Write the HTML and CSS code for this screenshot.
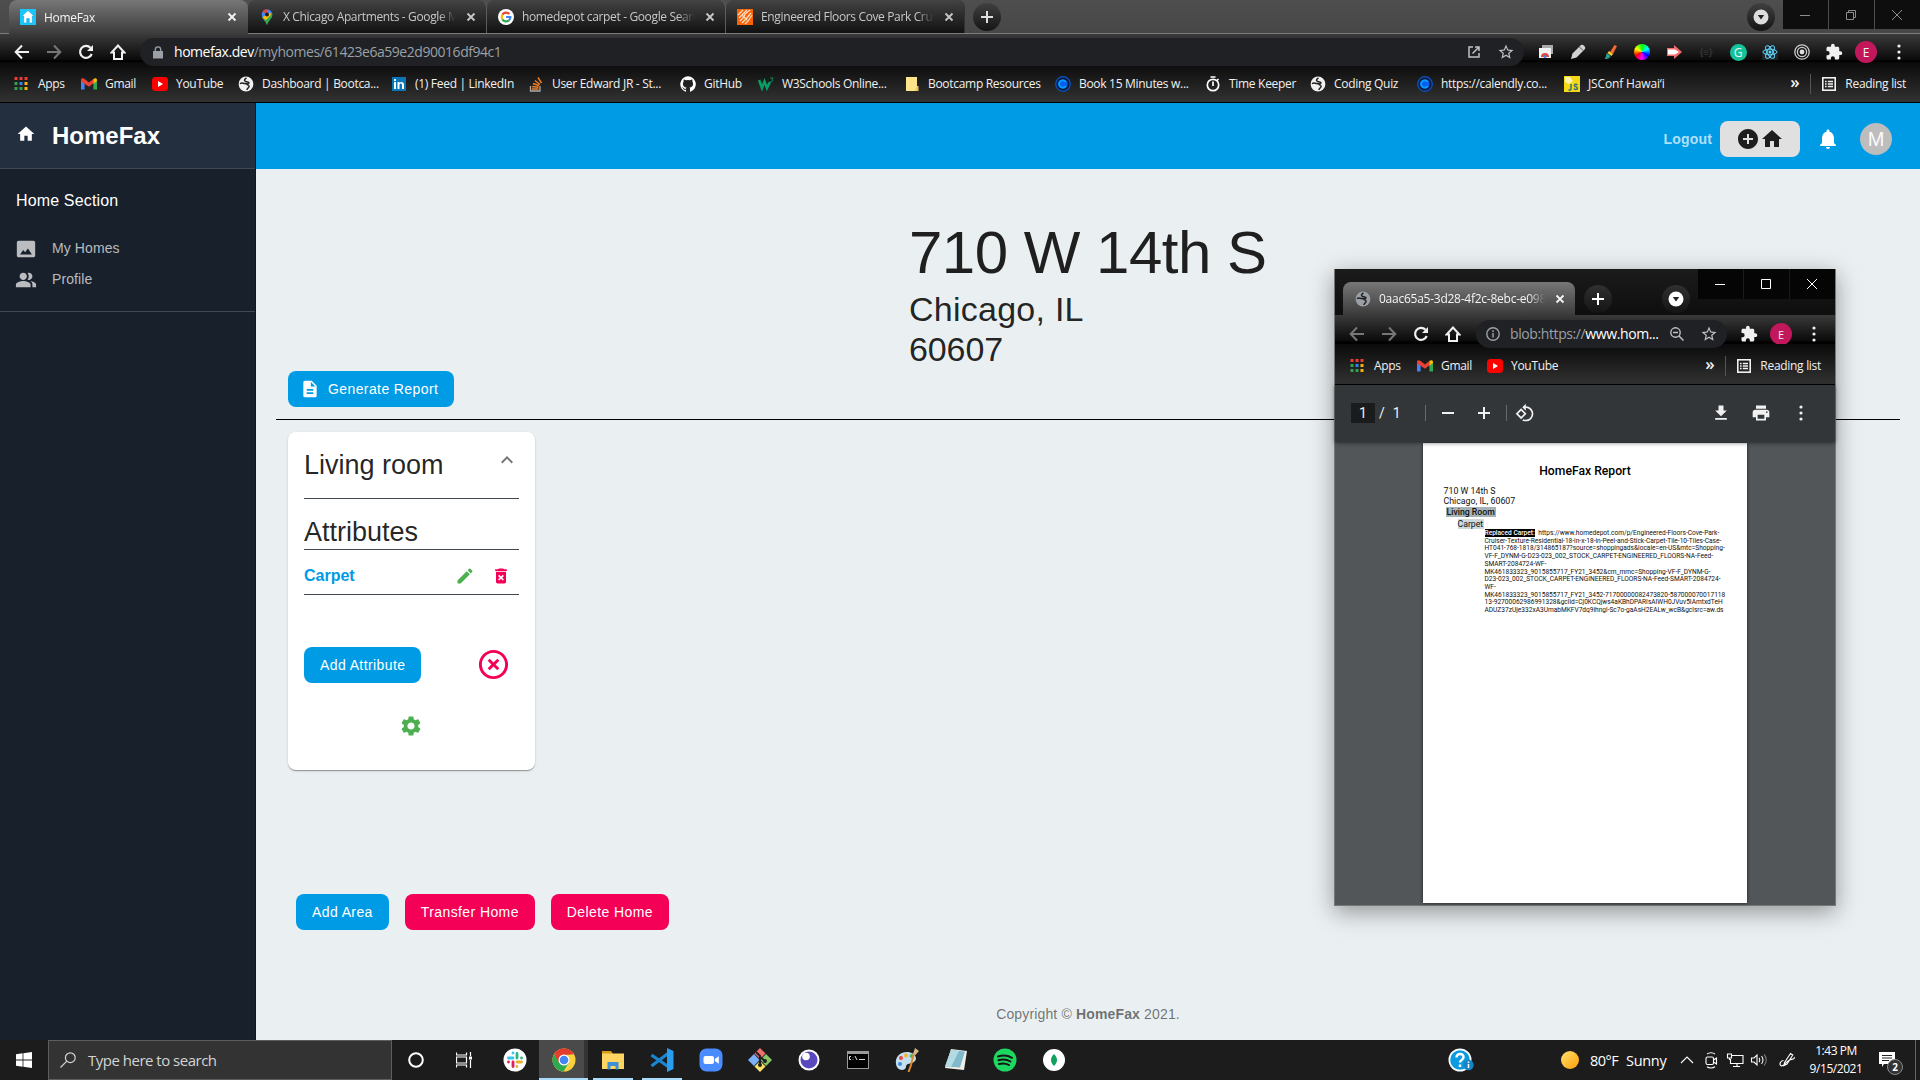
FILE: index.html
```html
<!DOCTYPE html>
<html lang="en">
<head>
<meta charset="utf-8">
<title>HomeFax</title>
<link rel="stylesheet" href="styles.css">
</head>
<body>
<svg class="sprite" aria-hidden="true">
  <symbol id="close" viewBox="0 0 10 10"><path d="M1.5 1.5l7 7m0-7l-7 7" fill="none" stroke="currentColor" stroke-width="1.8"/></symbol>
  <symbol id="thinx" viewBox="0 0 10 10"><path d="M0 0l10 10m0-10L0 10" fill="none" stroke="currentColor" stroke-width="1"/></symbol>
  <symbol id="plus" viewBox="0 0 12 12"><path d="M6 0v12M0 6h12" stroke="currentColor" stroke-width="2"/></symbol>
  <symbol id="minus" viewBox="0 0 12 12"><path d="M0 6h12" stroke="currentColor" stroke-width="2"/></symbol>
  <symbol id="drop" viewBox="0 0 16 16"><circle cx="8" cy="8" r="7.5" fill="currentColor"/><path d="M4.8 6h6.4L8 10.5z" fill="#222"/></symbol>
  <symbol id="back" viewBox="0 0 16 16"><path d="M15 8H2M8 1.5L1.700 8 8 14.500" fill="none" stroke="currentColor" stroke-width="2"/></symbol>
  <symbol id="fwd" viewBox="0 0 16 16"><path d="M1 8h13M8 1.500L14.300 8 8 14.500" fill="none" stroke="currentColor" stroke-width="2"/></symbol>
  <symbol id="reload" viewBox="0 0 16 16"><path d="M13.700 10A6 6 0 1 1 12.500 3.800" fill="none" stroke="currentColor" stroke-width="2.200"/><path d="M15 1v6H9z" fill="currentColor"/></symbol>
  <symbol id="homeo" viewBox="0 0 16 16"><path d="M8 1.500L1.500 8.500H4V15h8V8.500h2.500z" fill="none" stroke="currentColor" stroke-width="2"/></symbol>
  <symbol id="star" viewBox="0 0 24 24"><path fill="currentColor" d="M22 9.240l-7.190-.62L12 2 9.190 8.630 2 9.240l5.460 4.730L5.820 21 12 17.270 18.180 21l-1.630-7.030L22 9.240zM12 15.400l-3.760 2.270 1-4.280-3.320-2.880 4.380-.38L12 6.100l1.710 4.040 4.380.38-3.320 2.880 1 4.280L12 15.400z"/></symbol>
  <symbol id="puzzle" viewBox="0 0 24 24"><path fill="currentColor" d="M20.500 11H19V7c0-1.100-.9-2-2-2h-4V3.500a2.500 2.500 0 0 0-5 0V5H4c-1.100 0-2 .9-2 2v3.800h1.500a2.700 2.700 0 0 1 0 5.400H2V20c0 1.100.9 2 2 2h3.800v-1.500a2.700 2.700 0 0 1 5.400 0V22H17c1.100 0 2-.9 2-2v-4h1.500a2.500 2.500 0 0 0 0-5z"/></symbol>
  <symbol id="dots" viewBox="0 0 4 16"><g fill="currentColor"><circle cx="2" cy="2" r="1.600"/><circle cx="2" cy="8" r="1.600"/><circle cx="2" cy="14" r="1.600"/></g></symbol>
  <symbol id="apps" viewBox="0 0 14 14"><path fill="#f23b35" d="M0 0h3v3H0zM5 0h3v3H5zM10 0h3v3h-3z"/><path fill="#2fa14f" d="M0 5h3v3H0zM0 10h3v3H0z"/><path fill="#2a86f3" d="M5 5h3v3H5z"/><path fill="#2fa14f" d="M5 10h3v3H5z"/><path fill="#fbb30a" d="M10 5h3v3h-3zM10 10h3v3h-3z"/></symbol>
  <symbol id="gmail" viewBox="0 0 16 12"><path fill="#4285f4" d="M0 2v9.500h3.600V4.500z"/><path fill="#34a853" d="M12.400 4.500v7H16V2z"/><path fill="#ea4335" d="M0 2C0 0 2-.4 3.600 1L8 4.500 12.400 1v4.200L8 8.700 0 3.500z"/><path fill="#fbbc04" d="M12.400 1C14-.4 16 0 16 2v1l-3.600 2.700z"/></symbol>
  <symbol id="yt" viewBox="0 0 16 14"><rect width="16" height="14" rx="3.500" fill="#f00"/><path d="M6 4l5 3-5 3z" fill="#fff"/></symbol>
  <symbol id="globe" viewBox="0 0 16 16"><circle cx="8" cy="8" r="7.400" fill="currentColor"/><path d="M8.500 2C6 3.300 6 4.500 7.500 5.500c2 .8 3.500 0 3.500 1.300 0 1.300-2.500 1-4.500.7C4.500 7.200 3.500 6.500 2 7.800M9 14c0-1.500 1.500-2 2-3.200s-1-2.300-2.500-2.300" fill="none" stroke="#222" stroke-width="1.500"/></symbol>
  <symbol id="cal" viewBox="0 0 16 16"><circle cx="8" cy="8" r="7.300" fill="#0b1c42" stroke="#0957c8" stroke-width="1.200"/><circle cx="8" cy="8" r="4.600" fill="#0560f0"/><path d="M10.800 6A3.700 3.700 0 1 0 10.800 10" fill="none" stroke="#0a9bff" stroke-width="1.800"/></symbol>
  <symbol id="list" viewBox="0 0 14 14"><rect x=".8" y=".8" width="12.400" height="12.400" fill="none" stroke="currentColor" stroke-width="1.600"/><path d="M3 4.500h1.600M3 7h1.600M3 9.500h1.600M5.800 4.500H11M5.800 7H11M5.800 9.500H11" stroke="currentColor" stroke-width="1.400"/></symbol>
  <symbol id="home" viewBox="0 0 24 24"><path fill="currentColor" d="M10 20v-6h4v6h5v-8h3L12 3 2 12h3v8z"/></symbol>
</svg>

<header class="browser">
  <div class="tabs">
    <div class="tab on"><svg class="fav" viewBox="0 0 16 16"><rect width="16" height="16" fill="#18c6fb"/><path d="M8 1.500L2 7h1.700v7h3V9.500h2.600V14h3V7H14z" fill="#fff" stroke="#0b9bd8" stroke-width=".5"/></svg><span class="tab-t">HomeFax</span><svg class="x"><use href="#close"/></svg></div>
    <div class="tab"><svg class="fav" viewBox="0 0 16 16"><path fill="#34a853" d="M3 8c1 3 4 4 5 8 1-4 5-6 5-10.500z"/><circle cx="8" cy="5.500" r="5.300" fill="#4285f4"/><path fill="#ea4335" d="M3.500 2.500A5.500 5.500 0 0 1 8 .2L7.800 5.500z"/><path fill="#fbbc04" d="M3.500 8.200L11 3.500 13 7 7.500 12z"/><path fill="#34a853" d="M6 12l7.300-7.500c.5 4.500-3.500 6-5.300 11.500z"/><circle cx="8" cy="5.500" r="2" fill="#202020"/></svg><span class="tab-t">X Chicago Apartments - Google Maps</span><svg class="x"><use href="#close"/></svg></div>
    <div class="tab"><svg class="fav" viewBox="0 0 16 16"><circle cx="8" cy="8" r="8" fill="#fff"/><g fill="none" stroke-width="2.200"><path stroke="#ea4335" d="M4.400 5.600A4.400 4.400 0 0 1 11.300 5"/><path stroke="#fbbc04" d="M4.400 5.600a4.600 4.600 0 0 0 0 4.800"/><path stroke="#34a853" d="M4.400 10.400a4.400 4.400 0 0 0 6.500 1"/><path stroke="#4285f4" d="M8 8h4.400c0 1.500-.5 2.600-1.500 3.400"/></g></svg><span class="tab-t">homedepot carpet - Google Search</span><svg class="x"><use href="#close"/></svg></div>
    <div class="tab last"><svg class="fav" viewBox="0 0 16 16"><rect width="16" height="16" fill="#f96302"/><path d="M1 6l5-5M2 9l8-8M3 12l4-4 1-3 5-4M5 14l4-4 5-6M8 15l3-3 4-6M5 6l5 5" fill="none" stroke="#ffe0c8" stroke-width="1.200"/></svg><span class="tab-t">Engineered Floors Cove Park Cruiser</span><svg class="x"><use href="#close"/></svg></div>
    <span class="round"><svg class="s12"><use href="#plus"/></svg></span>
    <span class="round push"><svg class="s16"><use href="#drop"/></svg></span>
    <div class="wins dim"><span><svg class="s10"><path d="M0 5.500h10" stroke="currentColor"/></svg></span><span><svg class="s10" viewBox="0 0 10 10"><path d="M.5 2.500h7v7h-7zM2.500 2.500v-2h7v7h-2" fill="none" stroke="currentColor"/></svg></span><span><svg class="s10"><use href="#thinx"/></svg></span></div>
  </div>
  <div class="toolbar">
    <div class="nav"><span><svg class="s16"><use href="#back"/></svg></span><span class="off"><svg class="s16"><use href="#fwd"/></svg></span><span><svg class="s16"><use href="#reload"/></svg></span><span><svg class="s16"><use href="#homeo"/></svg></span></div>
    <div class="url">
      <svg class="lock" viewBox="0 0 10 12"><path d="M0 4.500h10V12H0z" fill="currentColor"/><path d="M2.300 5V3a2.700 2.700 0 0 1 5.400 0v2" fill="none" stroke="currentColor" stroke-width="1.300"/></svg>
      <span class="addr"><b>homefax.dev</b>/myhomes/61423e6a59e2d90016df94c1</span>
      <div class="slots url-i"><span><svg class="s12" viewBox="0 0 12 12"><path d="M5 1H1v10h10V7M7 1h4v4M11 1L4.500 7.500" fill="none" stroke="currentColor" stroke-width="1.500"/></svg></span><span><svg class="s17"><use href="#star"/></svg></span></div>
    </div>
    <div class="slots exts">
      <span><svg class="s16" viewBox="0 0 16 16"><path d="M4 1h11v9H4z" fill="#aaa"/><path d="M1 4h12v10H1z" fill="#f2f2f2"/><path d="M3 13a4 4 0 0 1 8 0z" fill="#e24a3b"/><circle cx="7" cy="12.500" r="1.500" fill="#4285f4"/></svg></span>
      <span><svg class="s16" viewBox="0 0 16 16"><path d="M1 15l1.500-5.500L11 1c2-1 5 2 4 4l-8.500 8.500z" fill="#d2d2d2"/><path d="M9.500 3l3.500 3.500" stroke="#555"/></svg></span>
      <span><svg class="s16" viewBox="0 0 16 16"><path d="M8 8l4.500-7 2.500 1-4 8z" fill="#f36a32"/><path d="M7 7l4 3-1.500 2-4-3z" fill="#f9c937"/><path d="M5 9l3.500 3c-1 3-4 3-6 3 2-2 1-4 2.500-6z" fill="#2e9e8a"/></svg></span>
      <span><i class="wheel"></i></span>
      <span><svg class="s16" viewBox="0 0 16 16"><path d="M1 4h7V1l8 7-8 7v-3H1z" fill="#f36b6b"/><path d="M2 5.500h7l4 2.500-4 2.500H2z" fill="#fff"/></svg></span>
      <span class="curly">{≡}</span>
      <span><i class="gram">G</i></span>
      <span><svg class="s16" viewBox="0 0 16 16"><rect width="16" height="16" fill="#20232a"/><g fill="none" stroke="#61dafb"><ellipse cx="8" cy="8" rx="7" ry="2.800"/><ellipse cx="8" cy="8" rx="7" ry="2.800" transform="rotate(60 8 8)"/><ellipse cx="8" cy="8" rx="7" ry="2.800" transform="rotate(120 8 8)"/></g><circle cx="8" cy="8" r="1.500" fill="#61dafb"/></svg></span>
      <span><svg class="s16" viewBox="0 0 16 16"><g fill="none" stroke="#ccc" stroke-width="1.300"><circle cx="8" cy="8" r="7.200"/><circle cx="8" cy="8" r="4.600"/></g><circle cx="8" cy="8" r="2.400" fill="#ddd"/></svg></span>
      <span><svg class="s17"><use href="#puzzle"/></svg></span>
      <span><i class="me">E</i></span>
      <span><svg class="dots"><use href="#dots"/></svg></span>
    </div>
  </div>
  <nav class="marks">
    <a style="width:67px"><svg class="s14"><use href="#apps"/></svg>Apps</a>
    <a style="width:71px"><svg><use href="#gmail"/></svg>Gmail</a>
    <a style="width:86px"><svg><use href="#yt"/></svg>YouTube</a>
    <a style="width:153px"><svg><use href="#globe"/></svg>Dashboard | Bootca...</a>
    <a style="width:137px"><svg viewBox="0 0 16 16"><path fill="#0a76b7" d="M1 1h14v14H1z"/><path fill="#fff" d="M3 6h2v7H3zM3 3h2v2H3zM6.500 6h2v1c1-1.800 4.500-1.500 4.500 1.500V13h-2V9c0-2-2.500-2-2.500 0v4h-2z"/></svg>(1) Feed | LinkedIn</a>
    <a style="width:152px"><svg viewBox="0 0 16 16"><path d="M2.500 10v5h9.500v-5" fill="none" stroke="#aaa" stroke-width="1.300"/><path d="M4 13h6.500M4.200 10.500l6.300.8M5 7.500l6 2M7 4.500l5 4M10 1.500l3.500 5.500" stroke="#f48024" stroke-width="1.400"/></svg>User Edward JR - St...</a>
    <a style="width:78px"><svg viewBox="0 0 16 16"><path fill="#fff" d="M8 .2a8 8 0 0 0-2.500 15.500c.4 0 .5-.2.500-.4v-1.500c-2.200.5-2.700-1-2.700-1-.4-.9-.9-1.100-.9-1.100-.7-.5.1-.5.1-.5.800.1 1.200.8 1.200.8.700 1.200 1.900.9 2.300.7 0-.5.300-.9.500-1.100-1.800-.2-3.600-.9-3.600-4 0-.9.300-1.600.8-2.100-.1-.2-.4-1 .1-2.100 0 0 .7-.2 2.200.8a7.600 7.600 0 0 1 4 0c1.500-1 2.200-.8 2.200-.8.500 1.100.2 1.900.1 2.100.5.500.8 1.200.8 2.100 0 3.100-1.800 3.800-3.600 4 .3.200.5.700.5 1.500v2.200c0 .2.200.5.600.4A8 8 0 0 0 8 .2z"/></svg>GitHub</a>
    <a style="width:146px"><svg viewBox="0 0 16 16"><path d="M1 4l3 8 2.500-6.500L9 12l3-6" fill="none" stroke="#0a9d63" stroke-width="2.600"/><path d="M12.500 2h2.500l-1 1.500c1.500.5.5 2.500-1.500 2" fill="none" stroke="#0a9d63"/></svg>W3Schools Online...</a>
    <a style="width:151px"><svg viewBox="0 0 16 16"><path d="M2 1h11v14H2z" fill="#ffe48c"/><path d="M13 10h1.500v5H11z" fill="#eec75a"/></svg>Bootcamp Resources</a>
    <a style="width:150px"><svg><use href="#cal"/></svg>Book 15 Minutes w...</a>
    <a style="width:105px"><svg viewBox="0 0 16 16"><g fill="none" stroke="#fff" stroke-width="1.700"><circle cx="8" cy="9" r="5.700"/><path d="M5.500 1h5M8 5.500V10M12 4.500l1.500-1.500"/></g></svg>Time Keeper</a>
    <a style="width:107px"><svg><use href="#globe"/></svg>Coding Quiz</a>
    <a style="width:147px"><svg><use href="#cal"/></svg>https://calendly.co...</a>
    <a><svg viewBox="0 0 16 16"><path fill="#f5d916" d="M0 0h16v16H0z"/><path fill="#fff3b0" d="M1 1h5l3 4-4 3-4-2z"/><path d="M7 8v5c0 1.500-2 1.500-2.500.5M13.500 9c-1-1-3.500-1-3 .8.500 1 3 .8 3 2.500s-3 1.500-3.500.2" fill="none" stroke="#3b6f78" stroke-width="1.500"/></svg><span class="jsc">JSConf Hawai‘i</span></a>
    <span class="more">»</span><span class="rl"><svg class="s14"><use href="#list"/></svg>Reading list</span>
  </nav>
</header>

<div class="app">
  <aside class="side">
    <div class="brand"><svg class="s20"><use href="#home"/></svg>HomeFax</div>
    <div class="cat">
      <h2>Home Section</h2>
      <a><svg class="s22" viewBox="0 0 24 24"><path fill="currentColor" d="M22 19V5c0-1.100-.9-2-2-2H4c-1.100 0-2 .9-2 2v14c0 1.100.9 2 2 2h16c1.100 0 2-.9 2-2zM8.900 12.980l2.100 2.530 3.100-4 4.400 6.490H5.500z"/></svg>My Homes</a>
      <a><svg class="s22" viewBox="0 0 24 24"><path fill="currentColor" d="M16.670 13.130C18.040 14.060 19 15.320 19 17v3h4v-3c0-2.180-3.570-3.470-6.330-3.870zM15 12c2.210 0 4-1.790 4-4s-1.790-4-4-4c-.47 0-.91.100-1.330.24C14.500 5.270 15 6.580 15 8s-.5 2.730-1.330 3.760c.42.140.86.240 1.330.24zM9 12c2.210 0 4-1.790 4-4s-1.790-4-4-4-4 1.790-4 4 1.790 4 4 4zm0 1c-2.670 0-8 1.340-8 4v3h16v-3c0-2.660-5.330-4-8-4z"/></svg>Profile</a>
    </div>
  </aside>
  <div class="col">
    <div class="topbar">
      <a class="logout">Logout</a>
      <button class="addhome"><svg class="s24" viewBox="0 0 24 24"><path fill="currentColor" d="M12 2C6.480 2 2 6.480 2 12s4.480 10 10 10 10-4.480 10-10S17.520 2 12 2zm5 11h-4v4h-2v-4H7v-2h4V7h2v4h4v2z"/></svg><svg class="s24"><use href="#home"/></svg></button>
      <svg class="s24" viewBox="0 0 24 24"><path fill="currentColor" d="M12 22c1.100 0 2-.9 2-2h-4c0 1.100.89 2 2 2zm6-6v-5c0-3.070-1.640-5.640-4.500-6.320V4c0-.83-.67-1.500-1.500-1.500s-1.500.67-1.500 1.500v.68C7.630 5.360 6 7.920 6 11v5l-2 2v1h16v-1l-2-2z"/></svg>
      <span class="avatar">M</span>
    </div>
    <main>
      <div class="place"><h1>710 W 14th S</h1><p>Chicago, IL</p><p>60607</p></div>
      <button class="btn gen"><svg class="s20" viewBox="0 0 24 24"><path fill="currentColor" d="M14 2H6c-1.100 0-1.990.9-1.990 2L4 20c0 1.100.89 2 1.990 2H18c1.100 0 2-.9 2-2V8l-6-6zm2 16H8v-2h8v2zm0-4H8v-2h8v2zm-3-5V3.500L18.500 9H13z"/></svg>Generate Report</button>
      <hr class="rule">
      <section class="card">
        <div class="card-h"><h3>Living room</h3><svg class="s24" viewBox="0 0 24 24"><path fill="currentColor" d="M12 8l-6 6 1.410 1.410L12 10.830l4.590 4.580L18 14z"/></svg></div>
        <h3 class="attr">Attributes</h3>
        <div class="row"><b>Carpet</b>
          <svg class="s20 green" viewBox="0 0 24 24"><path fill="currentColor" d="M3 17.250V21h3.750L17.810 9.940l-3.750-3.750L3 17.250zM20.710 7.040c.39-.39.39-1.020 0-1.410l-2.340-2.340c-.39-.39-1.020-.39-1.410 0l-1.830 1.830 3.750 3.750 1.830-1.830z"/></svg>
          <svg class="s20 red" viewBox="0 0 24 24"><path fill="currentColor" d="M6 19c0 1.100.9 2 2 2h8c1.100 0 2-.9 2-2V7H6v12zm2.460-7.120l1.410-1.410L12 12.590l2.120-2.120 1.410 1.410L13.410 14l2.120 2.120-1.410 1.410L12 15.410l-2.120 2.120-1.410-1.410L10.590 14l-2.130-2.120zM15.500 4l-1-1h-5l-1 1H5v2h14V4z" fill-rule="evenodd"/></svg></div>
        <div class="act"><button class="btn">Add Attribute</button><svg class="s35 red" viewBox="0 0 24 24"><path fill="currentColor" d="M14.590 8L12 10.590 9.410 8 8 9.410 10.590 12 8 14.590 9.410 16 12 13.410 14.590 16 16 14.590 13.410 12 16 9.410 14.590 8zM12 2C6.470 2 2 6.470 2 12s4.470 10 10 10 10-4.470 10-10S17.530 2 12 2zm0 18c-4.410 0-8-3.590-8-8s3.590-8 8-8 8 3.590 8 8-3.590 8-8 8z"/></svg></div>
        <svg class="s24 green gear" viewBox="0 0 24 24"><path fill="currentColor" d="M19.140 12.940c.04-.3.060-.61.060-.94 0-.32-.02-.64-.07-.94l2.030-1.580c.18-.14.23-.41.12-.61l-1.920-3.320c-.12-.22-.37-.29-.59-.22l-2.390.96c-.5-.38-1.030-.7-1.620-.94l-.36-2.540c-.04-.24-.24-.41-.48-.41h-3.840c-.24 0-.43.17-.47.41l-.36 2.540c-.59.24-1.130.57-1.620.94l-2.390-.96c-.22-.08-.47 0-.59.22L2.740 8.870c-.12.21-.08.47.12.61l2.030 1.580c-.05.3-.09.63-.09.94s.02.64.07.94l-2.030 1.580c-.18.14-.23.41-.12.61l1.920 3.320c.12.22.37.29.59.22l2.390-.96c.5.38 1.030.7 1.620.94l.36 2.540c.05.24.24.41.48.41h3.840c.24 0 .44-.17.47-.41l.36-2.540c.59-.24 1.130-.56 1.620-.94l2.390.96c.22.08.47 0 .59-.22l1.920-3.320c.12-.22.07-.47-.12-.61l-2.010-1.580zM12 15.600c-1.980 0-3.600-1.620-3.600-3.600s1.620-3.600 3.600-3.600 3.600 1.620 3.600 3.600-1.620 3.600-3.600 3.600z"/></svg>
      </section>
      <div class="foot-btns"><button class="btn">Add Area</button><button class="btn pink">Transfer Home</button><button class="btn pink">Delete Home</button></div>
      <footer>Copyright © <b>HomeFax</b> 2021.</footer>
    </main>
  </div>
</div>

<section class="popup">
  <div class="ptabs">
    <div class="tab on"><svg class="fav grey"><use href="#globe"/></svg><span class="tab-t">0aac65a5-3d28-4f2c-8ebc-e098d1</span><svg class="x"><use href="#close"/></svg></div>
    <span class="round"><svg class="s12"><use href="#plus"/></svg></span>
    <span class="round pdrop"><svg class="s16"><use href="#drop"/></svg></span>
    <div class="wins"><span><svg class="s10"><path d="M0 5.500h10" stroke="currentColor"/></svg></span><span><svg class="s10"><path d="M.5.5h9v9h-9z" fill="none" stroke="currentColor"/></svg></span><span><svg class="s10"><use href="#thinx"/></svg></span></div>
  </div>
  <div class="toolbar">
    <div class="nav"><span class="off"><svg class="s16"><use href="#back"/></svg></span><span class="off"><svg class="s16"><use href="#fwd"/></svg></span><span><svg class="s16"><use href="#reload"/></svg></span><span><svg class="s16"><use href="#homeo"/></svg></span></div>
    <div class="url">
      <svg class="s14" viewBox="0 0 14 14"><circle cx="7" cy="7" r="6.200" fill="none" stroke="currentColor" stroke-width="1.400"/><path d="M7 6v4.500M7 3.300v1.600" stroke="currentColor" stroke-width="1.500"/></svg>
      <span class="addr">blob:https://<b>www.hom...</b></span>
      <div class="slots url-i"><span><svg class="s14" viewBox="0 0 14 14"><path d="M9 9l4.500 4.500M3 5.500h5" stroke="currentColor" stroke-width="1.500"/><circle cx="5.500" cy="5.500" r="4.700" fill="none" stroke="currentColor" stroke-width="1.400"/></svg></span><span><svg class="s17"><use href="#star"/></svg></span></div>
    </div>
    <div class="slots exts"><span><svg class="s17"><use href="#puzzle"/></svg></span><span><i class="me">E</i></span><span><svg class="dots"><use href="#dots"/></svg></span></div>
  </div>
  <nav class="marks">
    <a style="width:67px"><svg class="s14"><use href="#apps"/></svg>Apps</a>
    <a style="width:70px"><svg><use href="#gmail"/></svg>Gmail</a>
    <a><svg><use href="#yt"/></svg>YouTube</a>
    <span class="more">»</span><span class="rl"><svg class="s14"><use href="#list"/></svg>Reading list</span>
  </nav>
  <div class="pdfbar">
    <span class="pg">1</span><span class="of">/</span><span>1</span>
    <i class="vr"></i><svg class="s12"><use href="#minus"/></svg><svg class="s12 pp"><use href="#plus"/></svg><i class="vr v2"></i>
    <svg class="s20" viewBox="0 0 24 24"><path fill="currentColor" d="M7.340 6.410L.86 12.900l6.490 6.480 6.490-6.480-6.500-6.490zM3.690 12.900l3.660-3.660L11 12.900l-3.660 3.660-3.650-3.660zm15.670-6.260C17.610 4.880 15.300 4 13 4V.76L8.760 5 13 9.240V6c1.790 0 3.580.68 4.950 2.050 2.730 2.730 2.730 7.170 0 9.900C16.580 19.320 14.790 20 13 20c-.97 0-1.940-.21-2.840-.61l-1.490 1.490C10.020 21.620 11.510 22 13 22c2.300 0 4.610-.88 6.360-2.640 3.520-3.510 3.520-9.210 0-12.720z"/></svg>
    <div class="pdf-r"><svg class="s20" viewBox="0 0 24 24"><path fill="currentColor" d="M19 9h-4V3H9v6H5l7 7 7-7zM5 18v2h14v-2H5z"/></svg><svg class="s20" viewBox="0 0 24 24"><path fill="currentColor" d="M19 8H5c-1.660 0-3 1.340-3 3v6h4v4h12v-4h4v-6c0-1.660-1.340-3-3-3zm-3 11H8v-5h8v5zm3-7c-.55 0-1-.45-1-1s.45-1 1-1 1 .45 1 1-.45 1-1 1zm-1-9H6v4h12V3z"/></svg><svg class="s20" viewBox="-8 -2 20 20"><use href="#dots" width="4" height="16"/></svg></div>
  </div>
  <div class="pdf">
    <article>
      <h4>HomeFax Report</h4>
      <p class="ad">710 W 14th S</p>
      <p class="ad ad2">Chicago, IL, 60607</p>
      <p class="rm"><mark>Living Room</mark></p>
      <p class="cp"><mark>Carpet</mark></p>
      <div class="body">
        <p><mark>Replaced Carpet:</mark> https://www.homedepot.com/p/Engineered-Floors-Cove-Park-</p>
        <p>Cruiser-Texture-Residential-18-in-x-18-in-Peel-and-Stick-Carpet-Tile-10-Tiles-Case-</p>
        <p>HT041-768-1818/314865187?source=shoppingads&amp;locale=en-US&amp;mtc=Shopping-</p>
        <p>VF-F_DYNM-G-D23-023_002_STOCK_CARPET-ENGINEERED_FLOORS-NA-Feed-</p>
        <p>SMART-2084724-WF-</p>
        <p>MK461833323_9015855717_FY21_3452&amp;cm_mmc=Shopping-VF-F_DYNM-G-</p>
        <p>D23-023_002_STOCK_CARPET-ENGINEERED_FLOORS-NA-Feed-SMART-2084724-</p>
        <p>WF-</p>
        <p>MK461833323_9015855717_FY21_3452-71700000082473820-587000070017118</p>
        <p>13-92700062986991328&amp;gclid=Cj0KCQjws4aKBhDPARIsAIWH0JVuv5IAmtxdTeH</p>
        <p>ADUZ37zUje332xA3UmabMKFV7dq9ihngl-Sc7o-gaAsH2EALw_wcB&amp;gclsrc=aw.ds</p>
      </div>
    </article>
  </div>
</section>

<div class="taskbar">
  <span class="start"><svg class="s16" viewBox="0 0 16 16"><path fill="#fff" d="M0 2.200L6.600 1.300v6.300H0zM7.400 1.200L16 0v7.600H7.400zM0 8.400h6.600v6.300L0 13.800zM7.400 8.400H16V16l-8.600-1.200z"/></svg></span>
  <div class="search"><svg class="s16" viewBox="0 0 16 16"><circle cx="10.300" cy="5.700" r="4.900" fill="none" stroke="currentColor" stroke-width="1.200"/><path d="M6.800 9.200L.5 15.500" stroke="currentColor" stroke-width="1.200"/></svg>Type here to search</div>
  <span class="t48"><svg class="s16" viewBox="0 0 16 16"><circle cx="8" cy="8" r="6.800" fill="none" stroke="#fff" stroke-width="2"/></svg></span>
  <span class="t48 tv"><svg class="s16" viewBox="0 0 16 16"><path d="M.5.500v2.500h10V.5M.5 15.500V13h10v2.500M.5 5h10v6H.5zM14.500 0v4M14.500 8v8" fill="none" stroke="#fff" stroke-width="1.200"/><path d="M13 4.500h3v3h-3z" fill="#fff"/></svg></span>
  <div class="pins">
    <span><svg viewBox="0 0 24 24"><circle cx="12" cy="12" r="11.500" fill="#fff"/><g stroke-width="2.800" stroke-linecap="round"><path stroke="#36c5f0" d="M10 5v.1M5.500 10H10"/><path stroke="#2eb67d" d="M14 5.500V10M18.500 10v.1"/><path stroke="#ecb22e" d="M14 14h4.500M14 18.500v.1"/><path stroke="#e01e5a" d="M10 14v4.500M5.500 14v.1"/></g></svg></span>
    <span class="act-app"><svg viewBox="0 0 24 24"><circle cx="12" cy="12" r="11.500" fill="#f9d03e"/><path fill="#e33b2e" d="M2 6.300A11.500 11.500 0 0 1 22 6.300L12 7z"/><path fill="#e33b2e" d="M2 6.300L7 15l5-8.500 10-.2H2z"/><path fill="#2da94f" d="M2 6.300A11.500 11.500 0 0 0 11.500 23.500L16.500 15 7 14.500z"/><circle cx="12" cy="12" r="5.500" fill="#fff"/><circle cx="12" cy="12" r="4.300" fill="#4285f4"/></svg></span>
    <span class="open"><svg viewBox="0 0 24 24"><path fill="#d99a1c" d="M1 3h9l2 3H1z"/><path fill="#ffd561" d="M1 5.500h22V21H1z"/><path d="M6.500 21.500V14h11v7.500h-3V18h-5v3.500z" fill="#3d8fd6"/></svg></span>
    <span class="open"><svg viewBox="0 0 24 24"><path fill="none" stroke="#1a86d2" stroke-width="3.200" d="M18 5.500L1.500 18M18 18.500L1.500 7"/><path fill="#2a9df0" d="M17 0l6.500 3v18L17 24z"/></svg></span>
    <span><svg viewBox="0 0 24 24"><rect x=".5" y=".5" width="23" height="23" rx="7" fill="#4a8cff"/><rect x="4.500" y="8" width="10.500" height="8" rx="2" fill="#fff"/><path fill="#fff" d="M15.800 11l4-2.800v7.600l-4-2.800z"/></svg></span>
    <span><svg viewBox="0 0 24 24"><path fill="#f26d6d" d="M12 0l5.500 5.500L12 11 6.500 5.500z"/><path fill="#7cb0f7" d="M6 6l5.500 6L6 18 0 12z"/><path fill="#89c765" d="M18 6l6 6-6 6-5.500-6z"/><path fill="#fbe06a" d="M12 13l5.500 5.500L12 24l-5.500-5.500z"/><path d="M8 4l4 4v9M12 9l5 4" fill="none" stroke="#222" stroke-width="2"/><circle cx="12" cy="17" r="2" fill="#222"/><circle cx="17" cy="13" r="2" fill="#222"/></svg></span>
    <span><svg viewBox="0 0 24 24"><circle cx="12" cy="12" r="10.500" fill="#fff"/><circle cx="12" cy="12" r="8.500" fill="#5849be"/><circle cx="9" cy="8.500" r="3.800" fill="#fff"/></svg></span>
    <span><svg viewBox="0 0 24 24"><path fill="#999" d="M1 3h22v18H1z"/><path d="M2 6h20v14H2z"/><path d="M5 8.500H3.500v3H5M7 9v.5M7 11v.5M9 8l2 4M13 11.500h6" fill="none" stroke="#ddd"/></svg></span>
    <span><svg viewBox="0 0 24 24"><path d="M12 4C4 4 0 10 1 16c1 6 6 7 9 5 2-2 0-4 3-5s7-1 8-5c0-5-5-7-9-7z" fill="#c5dfef"/><circle cx="6" cy="10" r="2" fill="#e8453c"/><circle cx="11" cy="7.500" r="2" fill="#f3b52f"/><circle cx="16.500" cy="8" r="2" fill="#5cb85c"/><circle cx="5" cy="16" r="2" fill="#3d8fd6"/><path d="M19 5l-3 12-2.500 7" stroke="#e08a2c" stroke-width="2" fill="none"/><path d="M18 6l2-6 4 3-3.500 4z" fill="#d9b48a"/></svg></span>
    <span><svg viewBox="0 0 24 24"><path d="M7 1l16 2-3 19-19-2z" fill="#f1efe6"/><path d="M7 2l14 1.500-5 16-15-1z" fill="#7fb9cb"/><path d="M7 2l8 1-8 16-6-.5z" fill="#b4dae3"/></svg></span>
    <span><svg viewBox="0 0 24 24"><circle cx="12" cy="12" r="11.500" fill="#1ed760"/><path d="M5 8.500c5-1.500 10-1 14 1.300M5.500 12.300c4.500-1.300 8.500-.8 12 1.200M6 16c4-1 7-.7 10 1" stroke="#161616" stroke-width="2" fill="none" stroke-linecap="round"/></svg></span>
    <span><svg viewBox="0 0 24 24"><circle cx="12" cy="12" r="11" fill="#fff"/><path d="M12 6c4 4 4 8 0 12-4-4-4-8 0-12z" fill="#12a05c"/></svg></span>
  </div>
  <span class="help"><svg viewBox="0 0 26 24"><circle cx="12" cy="12" r="11.500" fill="#fff"/><circle cx="12" cy="12" r="9.800" fill="#0d9be0"/><path d="M8.500 9.500c0-5 7.500-4.500 7 0-.3 2.300-3.500 2.500-3.500 5M12 16.500V19" stroke="#fff" stroke-width="2.400" fill="none"/><circle cx="20.500" cy="17" r="5.200" fill="#1583c4"/><path d="M20.500 13.500v1.500M20.500 16v4" stroke="#fff" stroke-width="1.600"/></svg></span>
  <div class="weather"><i class="sun"></i><span>80°F</span><span>Sunny</span></div>
  <div class="tray">
    <span><svg viewBox="0 0 16 16"><path d="M2 11l6-6 6 6"/></svg></span>
    <span><svg viewBox="0 0 16 16"><rect x="3" y="5" width="7.500" height="7.500" rx="1.500"/><path d="M10.500 8l3-2v6l-3-2M4 2.200C6 .3 10 .3 12 2.200M4 14.800c2 1.600 6 1.600 8 0"/></svg></span>
    <span><svg viewBox="0 0 16 16"><path d="M5 3.500h11v8H3.500V7M10 11.500v3M6 14.500h7M.5 2h4v4h-4zM2.500 6v2"/></svg></span>
    <span><svg viewBox="0 0 16 16"><path d="M.5 6h2.500l3-3v10l-3-3H.500zM8 6c1 1 1 3 0 4M10.500 4.200c2 2 2 5.600 0 7.600"/><path stroke="#777" d="M13 2.500c3 3 3 8 0 11"/></svg></span>
    <span class="pen"><svg viewBox="0 0 16 16"><path d="M5.500 10.500L11.500 1.500l2.300 1.500L8 12l-3 1.500zM4.500 8.500c-3 0-5 4-2 5.500 3 0 4-4 8-6 3-1 6-1 4.500-3"/></svg></span>
  </div>
  <div class="clock"><span>1:43 PM</span><span>9/15/2021</span></div>
  <div class="notif"><svg class="s16" viewBox="0 0 16 16"><path fill="#fff" d="M0 0h16v12H5l-2 3v-3H0z"/><path d="M3 3.500h10M3 6h10M3 8.500h7" stroke="#222"/></svg><b>2</b></div>
</div>
</body>
</html>
```
FILE: styles.css
```css
* { box-sizing: border-box; }
body { margin: 0; width: 1920px; height: 1080px; overflow: hidden; display: flex; flex-direction: column; position: relative; font-family: "Liberation Sans", Arial, sans-serif; background: #eaeff1; }
h1, h2, h3, h4, p { margin: 0; font-weight: 400; }
i { font-style: normal; }
svg { flex: none; display: block; }
button { font: inherit; border: 0; }
.sprite { position: absolute; width: 0; height: 0; }
.s10 { width: 10px; height: 10px; }
.s12 { width: 12px; height: 12px; }
.s14 { width: 14px; height: 14px; }
.s16 { width: 16px; height: 16px; }
.s17 { width: 18px; height: 18px; }
.s20 { width: 20px; height: 20px; }
.s22 { width: 22px; height: 22px; }
.s24 { width: 24px; height: 24px; }
.s35 { width: 35px; height: 35px; }
.green { color: #4caf50; }
.red { color: #f50057; }

/* browser chrome */
.browser, .popup { font-family: "Open Sans", "Noto Sans", sans-serif; font-size: 12px; letter-spacing: -0.3px; color: #f1f1f1; }
.browser { flex: none; height: 103px; background: #0a0a0a; }
.tabs { display: flex; height: 34px; padding-left: 9px; background: linear-gradient(#4e4e4e, #474747); border-bottom: 1px solid #7c7c7c; }
.tab { width: 239px; height: 33px; flex: none; display: flex; align-items: center; padding: 0 10px 0 11px; color: #c8c8c8; background: linear-gradient(#434343, #111); border-right: 1px solid #5d5d5d; border-radius: 8px 8px 0 0; }
.tab.on { height: 34px; color: #f4f4f4; background: linear-gradient(#777, #3b3b3b); border: 0; padding-right: 11px; }
.tab.last { border-color: #333; }
.fav { width: 16px; height: 16px; margin-right: 8px; }
.grey { color: #9aa0a6; }
.tab-t { flex: 1; overflow: hidden; white-space: nowrap; margin-right: 10px; mask-image: linear-gradient(90deg, #000 90%, transparent); }
.tab:not(.on) .tab-t { letter-spacing: -.36px; }
.x { width: 10px; height: 10px; }
.round { width: 28px; height: 28px; margin: 3px 0 0 8px; border-radius: 50%; flex: none; display: flex; align-items: center; justify-content: center; background: linear-gradient(#404040, #151515); color: #ddd; }
.round.push { margin-left: auto; margin-right: 8px; }
.wins { display: flex; height: 29px; background: #050505; color: #fff; }
.wins span { width: 46px; display: flex; align-items: center; justify-content: center; border-left: 1px solid #1b1b1b; padding-right: 2px; }
.wins.dim { background: #0e0e0e; color: #8d8d8d; }
.wins.dim span { border-color: #4d4d4d; }
.wins span:first-child { border: 0; width: 45px; }
.toolbar { height: 28px; display: flex; background: linear-gradient(#3a3a3a, #0a0a0a 26px, #000 27px); padding: 4px 4px 0 6px; }
.nav { display: flex; width: 134px; height: 28px; align-items: center; }
.nav span, .slots span { width: 32px; height: 28px; flex: none; display: flex; align-items: center; justify-content: center; }
.nav .off { color: #777; }
.url { flex: 1; height: 28px; position: relative; z-index: 1; border-radius: 14px; background: #202124; display: flex; align-items: center; color: #9aa0a6; padding-left: 13px; }
.lock { width: 10px; height: 13px; margin-right: 11px; }
.addr { font-size: 14px; letter-spacing: -0.46px; white-space: nowrap; color: #9aa0a6; margin-top: -2px; }
.addr b { font-weight: 400; color: #fff; }
.slots { display: flex; }
.url-i { margin-left: auto; padding-right: 2px; color: #bdc1c6; }
.exts { padding-left: 6px; }
.exts span:last-child { width: 34px; }
.wheel { width: 16px; height: 16px; border-radius: 50%; background: conic-gradient(#0f0, #0ff, #00f, #f0f, #f00, #ff0, #0f0); }
.curly { color: #333; font-weight: 700; font-size: 10px; }
.gram, .me { width: 22px; height: 22px; border-radius: 50%; background: #c2185b; display: flex; align-items: center; justify-content: center; font-size: 12px; }
.gram { width: 17px; height: 17px; background: #15c39a; }
.dots { width: 4px; height: 16px; }
.marks { height: 41px; display: flex; align-items: center; padding: 2px 14px 0; background: linear-gradient(#0a0a0a, #323232 40px, #000 40px); white-space: nowrap; }
.marks a, .rl { display: flex; align-items: center; flex: none; }
.marks a svg { width: 16px; height: 16px; margin-right: 8px; }
.marks a svg.s14 { width: 15px; height: 14px; margin-right: 9px; }
.jsc { letter-spacing: -.15px; }
.more { margin-left: auto; font-size: 17px; line-height: 16px; padding-bottom: 3px; font-weight: 600; width: 20px; }
.rl { border-left: 1px solid #555; padding-left: 11px; height: 20px; gap: 9px; }

/* application */
.app { height: 937px; display: flex; }
.side { width: 256px; background: #18202c; border-right: 1px solid #111722; color: #fff; }
.brand { height: 66px; background: #232f3e; border-bottom: 1px solid #404854; display: flex; align-items: center; gap: 16px; padding-left: 16px; font-size: 24px; font-weight: 700; }
.brand svg { margin-top: -4px; }
.cat { height: 143px; border-bottom: 1px solid #404854; padding: 16px 16px 0; }
.cat h2 { font-size: 16px; line-height: 32px; letter-spacing: .15px; margin-bottom: 15px; }
.cat a { display: flex; align-items: center; height: 31px; font-size: 14px; letter-spacing: .1px; color: rgba(255,255,255,.7); }
.cat a svg { margin: 2px 15px 0 -1px; }
.col { flex: 1; display: flex; flex-direction: column; }
.topbar { height: 66px; background: #009be5; display: flex; align-items: center; justify-content: flex-end; padding: 6px 28px 0; color: #fff; }
.logout { font-weight: 700; font-size: 14px; letter-spacing: .2px; color: rgba(255,255,255,.7); margin-right: 8px; }
.addhome { width: 80px; height: 36px; border-radius: 8px; background: #e0e0e0; color: rgba(0,0,0,.87); display: flex; align-items: center; justify-content: center; padding: 0; margin-right: 16px; }
.avatar { width: 32px; height: 32px; border-radius: 50%; background: #bdbdbd; color: #fafafa; font-size: 20px; margin-left: 20px; display: flex; align-items: center; justify-content: center; }
main { flex: 1; padding: 48px 20px 0; display: flex; flex-direction: column; align-items: flex-start; color: rgba(0,0,0,.87); }
.place { align-self: stretch; padding-left: 633px; height: 154px; }
.place h1 { font-size: 60px; line-height: 72px; letter-spacing: -.5px; }
.place p { font-size: 34px; line-height: 41px; letter-spacing: .25px; }
.place p + p { letter-spacing: -.1px; margin-top: -1px; }
.btn { height: 36px; padding: 0 16px; border-radius: 8px; background: #009be5; color: #fff; font-size: 14px; letter-spacing: .4px; display: flex; align-items: center; }
.pink { background: #f50057; }
.gen { margin-left: 12px; padding-left: 12px; gap: 8px; }
.rule { width: 1624px; height: 1px; border: 0; background: #000; margin: 12px 0; }
.card { width: 247px; height: 338px; margin-left: 12px; padding: 0 16px; border-radius: 8px; background: #fff; box-shadow: 0 2px 1px -1px rgba(0,0,0,.2), 0 1px 1px rgba(0,0,0,.14), 0 1px 3px rgba(0,0,0,.12); display: flex; flex-direction: column; }
.card h3 { font-size: 27px; line-height: 32px; }
.card-h { height: 67px; padding: 17px 0 0; display: flex; justify-content: space-between; border-bottom: 1px solid #404854; }
.card-h svg { color: rgba(0,0,0,.54); margin-top: -1px; }
.attr { height: 51px; padding-top: 17px; border-bottom: 1px solid #404854; }
.row { height: 45px; border-bottom: 1px solid #404854; display: flex; align-items: center; padding: 8px 8px 0 0; color: #009be5; }
.row b { margin: -1px auto 0 0; }
.row .red { margin-left: 16px; }
.act { display: flex; align-items: center; justify-content: space-between; margin-top: 52px; padding-right: 8px; height: 36px; }
.act svg { margin-top: -1px; }
.gear { margin: 31px 0 0 95px; }
.foot-btns { display: flex; gap: 16px; margin: 124px 0 0 20px; }
footer { align-self: center; margin: 75px 0 0; font-size: 14px; line-height: 18px; letter-spacing: .15px; color: rgba(0,0,0,.54); }

/* report window */
.popup { position: absolute; left: 1334px; top: 269px; width: 502px; height: 637px; border: 1px solid #777; border-top: 0; background: #525659; box-shadow: 0 6px 22px rgba(0,0,0,.38); display: flex; flex-direction: column; }
.ptabs { height: 46px; display: flex; align-items: flex-start; padding: 0 0 0 8px; background: linear-gradient(#1b1b1b, #0e0e0e); flex: none; }
.ptabs .tab { width: 232px; margin-top: 13px; height: 33px; padding: 0 10px 0 12px; }
.ptabs .tab-t { letter-spacing: -.25px; }
.ptabs .round { margin: 16px 0 0 9px; background: linear-gradient(#303030, #141414); color: #fff; }
.ptabs .pdrop { margin: 16px 8px 0 50px; }
.ptabs .wins { height: 30px; }
.wins span { flex: none; }
.popup .toolbar { height: 29px; padding-top: 5px; flex: none; padding-right: 4px; }
.popup .nav { width: 135px; }
.popup .url { flex: none; width: 251px; padding-left: 10px; }
.popup .addr { margin-left: 10px; letter-spacing: -.4px; }
.popup .exts { padding-left: 6px; }
.popup .marks { flex: none; padding-left: 15px; }
.popup .me { font-size: 11px; }
.pdfbar { flex: none; height: 57px; display: flex; align-items: center; background: #323639; padding: 0 24px 2px 16px; color: #f1f1f1; font-family: Roboto, sans-serif; font-size: 14px; letter-spacing: 0; box-shadow: 0 1px 4px rgba(0,0,0,.5); z-index: 1; }
.pg { width: 24px; height: 20px; background: #191b1c; text-align: center; line-height: 20px; }
.of { margin: 0 8px 0 4px; }
.vr { width: 1px; height: 16px; background: #666a6c; margin: 0 16px 0 24px; }
.pp { margin-left: 24px; }
.v2 { margin: 0 8px 0 16px; }
.pdf-r { margin-left: auto; display: flex; gap: 20px; }
.pdf { flex: 1; padding: 1px 0 0 88px; }
article { width: 324px; height: 460px; background: #fff; color: #111; font-family: Roboto, sans-serif; letter-spacing: 0; box-shadow: 0 0 3px #222; padding: 20px 0 0 20.500px; white-space: nowrap; }
article h4 { font-size: 12.200px; font-weight: 500; line-height: 16px; width: 283px; text-align: center; margin-bottom: 7px; color: #000; }
article mark { color: inherit; background: #a5b3b6; }
.ad { font-size: 8.800px; line-height: 10px; }
.rm { font-size: 8.700px; line-height: 10px; font-weight: 500; margin: 1px 0 0 2px; }
.rm mark { padding: 0 1px; display: block; width: 50px; }
.cp { font-size: 8.700px; line-height: 10px; margin: 2px 0 0 14px; }
.cp mark { background: #cfd9da; display: block; width: 26px; }
.body { margin: 1px 0 0 41px; font-size: 6.580px; line-height: 7.700px; }
.body mark { background: #000; color: #fff; font-weight: 500; margin-right: 2px; }

/* taskbar */
.taskbar { height: 40px; flex: none; display: flex; align-items: center; background: #1c1c1c; color: #fff; font-family: "Open Sans", "Noto Sans", sans-serif; }
.start { width: 48px; display: flex; justify-content: center; }
.search { width: 344px; height: 40px; background: #333; border: 1px solid #5e5e5e; display: flex; align-items: center; gap: 12px; padding-left: 11px; font-size: 15px; letter-spacing: -.5px; color: #d4d4d4; }
.t48 { width: 48px; display: flex; justify-content: center; }
.pins { display: flex; height: 40px; margin-left: 2px; }
.pins span { width: 49px; height: 40px; display: flex; align-items: center; justify-content: center; }
.pins svg { width: 24px; height: 24px; }
.pins .act-app { background: linear-gradient(90deg, #4a4a4a 45px, #333 45px); border-bottom: 2px solid #a8dcfa; padding-top: 2px; }
.pins .open { background: linear-gradient(#a8dcfa, #a8dcfa) 50% 100% / 40px 2px no-repeat; }
.help { margin-left: 370px; width: 26px; }
.weather { display: flex; align-items: center; font-size: 14.500px; letter-spacing: -.55px; margin-left: 87px; white-space: nowrap; width: 114px; }
.sun { width: 18px; height: 18px; border-radius: 50%; background: linear-gradient(135deg, #ffe36b, #ff9d0b); margin-right: 11px; }
.weather span { width: 36px; }
.weather span + span { letter-spacing: -.3px; }
.tray { display: flex; }
.tray span { width: 24px; display: flex; justify-content: center; }
.tray .pen { width: 32px; }
.tray svg { width: 16px; height: 16px; fill: none; stroke: #fff; stroke-width: 1.100; overflow: visible; }
.clock { display: flex; flex-direction: column; align-items: center; font-size: 12px; line-height: 18px; letter-spacing: -.45px; width: 64px; padding-left: 2px; }
.notif { display: flex; align-items: flex-start; margin-left: 12px; width: 37px; height: 40px; padding-top: 12px; border-right: 1px solid #666; }
.notif b { width: 16px; height: 16px; flex: none; margin: 7px 0 0 -8px; border-radius: 50%; background: #333; border: 1px solid #888; font-size: 10px; line-height: 14px; text-align: center; }
```
